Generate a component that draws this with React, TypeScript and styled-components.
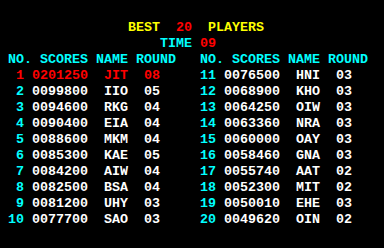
import styled, { createGlobalStyle } from "styled-components";

const Global = createGlobalStyle`
  html, body {
    margin: 0;
    padding: 0;
    background: #000;
  }
`;

const Screen = styled.div`
  width: 384px;
  height: 248px;
  background: #000;
  box-sizing: border-box;
  padding-top: 20px;
  font-family: "Liberation Mono", "DejaVu Sans Mono", monospace;
  font-size: 13.333px;
  font-weight: 700;
  line-height: 16px;
  white-space: pre;
  color: #fff;
  -webkit-font-smoothing: none;
`;

const Line = styled.div<{ $indent: number }>`
  height: 16px;
  padding-left: ${({ $indent }) => $indent * 8}px;
`;

const Tone = styled.span<{ $color: string }>`
  color: ${({ $color }) => $color};
`;

const Columns = styled.div`
  display: grid;
  grid-template-columns: 192px 192px;
`;

const Entry = styled.div<{ $color?: string }>`
  display: grid;
  grid-template-columns: 24px 64px 32px auto;
  column-gap: 8px;
  height: 16px;
  color: ${({ $color }) => $color ?? "#fff"};
`;

const Rank = styled.span<{ $color?: string }>`
  text-align: right;
  color: ${({ $color }) => $color ?? "#00ffff"};
`;

const Header = styled.div`
  height: 16px;
  color: #00ffff;
`;

const YELLOW = "#ffff00";
const RED = "#ff0000";
const CYAN = "#00ffff";

type Score = [number, string, string, string];

const scores: Score[] = [
  [1, "0201250", "JIT", "08"],
  [2, "0099800", "IIO", "05"],
  [3, "0094600", "RKG", "04"],
  [4, "0090400", "EIA", "04"],
  [5, "0088600", "MKM", "04"],
  [6, "0085300", "KAE", "05"],
  [7, "0084200", "AIW", "04"],
  [8, "0082500", "BSA", "04"],
  [9, "0081200", "UHY", "03"],
  [10, "0077700", "SAO", "03"],
  [11, "0076500", "HNI", "03"],
  [12, "0068900", "KHO", "03"],
  [13, "0064250", "OIW", "03"],
  [14, "0063360", "NRA", "03"],
  [15, "0060000", "OAY", "03"],
  [16, "0058460", "GNA", "03"],
  [17, "0055740", "AAT", "02"],
  [18, "0052300", "MIT", "02"],
  [19, "0050010", "EHE", "03"],
  [20, "0049620", "OIN", "02"],
];

const ScoreEntry: React.FC<{ s: Score }> = ({ s }) => {
  const [no, score, name, round] = s;
  const highlight = no === 1 ? RED : undefined;
  return (
    <Entry $color={highlight}>
      <Rank $color={highlight}>{no}</Rank>
      <span>{score}</span>
      <span>{name}</span>
      <span>{round}</span>
    </Entry>
  );
};

const App: React.FC = () => {
  const left = scores.slice(0, 10);
  const right = scores.slice(10);

  return (
    <>
      <Global />
      <Screen>
        <Line $indent={16}>
          <Tone $color={YELLOW}>BEST</Tone>
          {"  "}
          <Tone $color={RED}>20</Tone>
          {"  "}
          <Tone $color={YELLOW}>PLAYERS</Tone>
        </Line>
        <Line $indent={20}>
          <Tone $color={CYAN}>TIME</Tone> <Tone $color={RED}>09</Tone>
        </Line>
        <Columns>
          <Header>{" NO. SCORES NAME ROUND"}</Header>
          <Header>{" NO. SCORES NAME ROUND"}</Header>
          {left.map((s, i) => [
            <ScoreEntry key={s[0]} s={s} />,
            <ScoreEntry key={right[i][0]} s={right[i]} />,
          ])}
        </Columns>
      </Screen>
    </>
  );
};

export default App;
